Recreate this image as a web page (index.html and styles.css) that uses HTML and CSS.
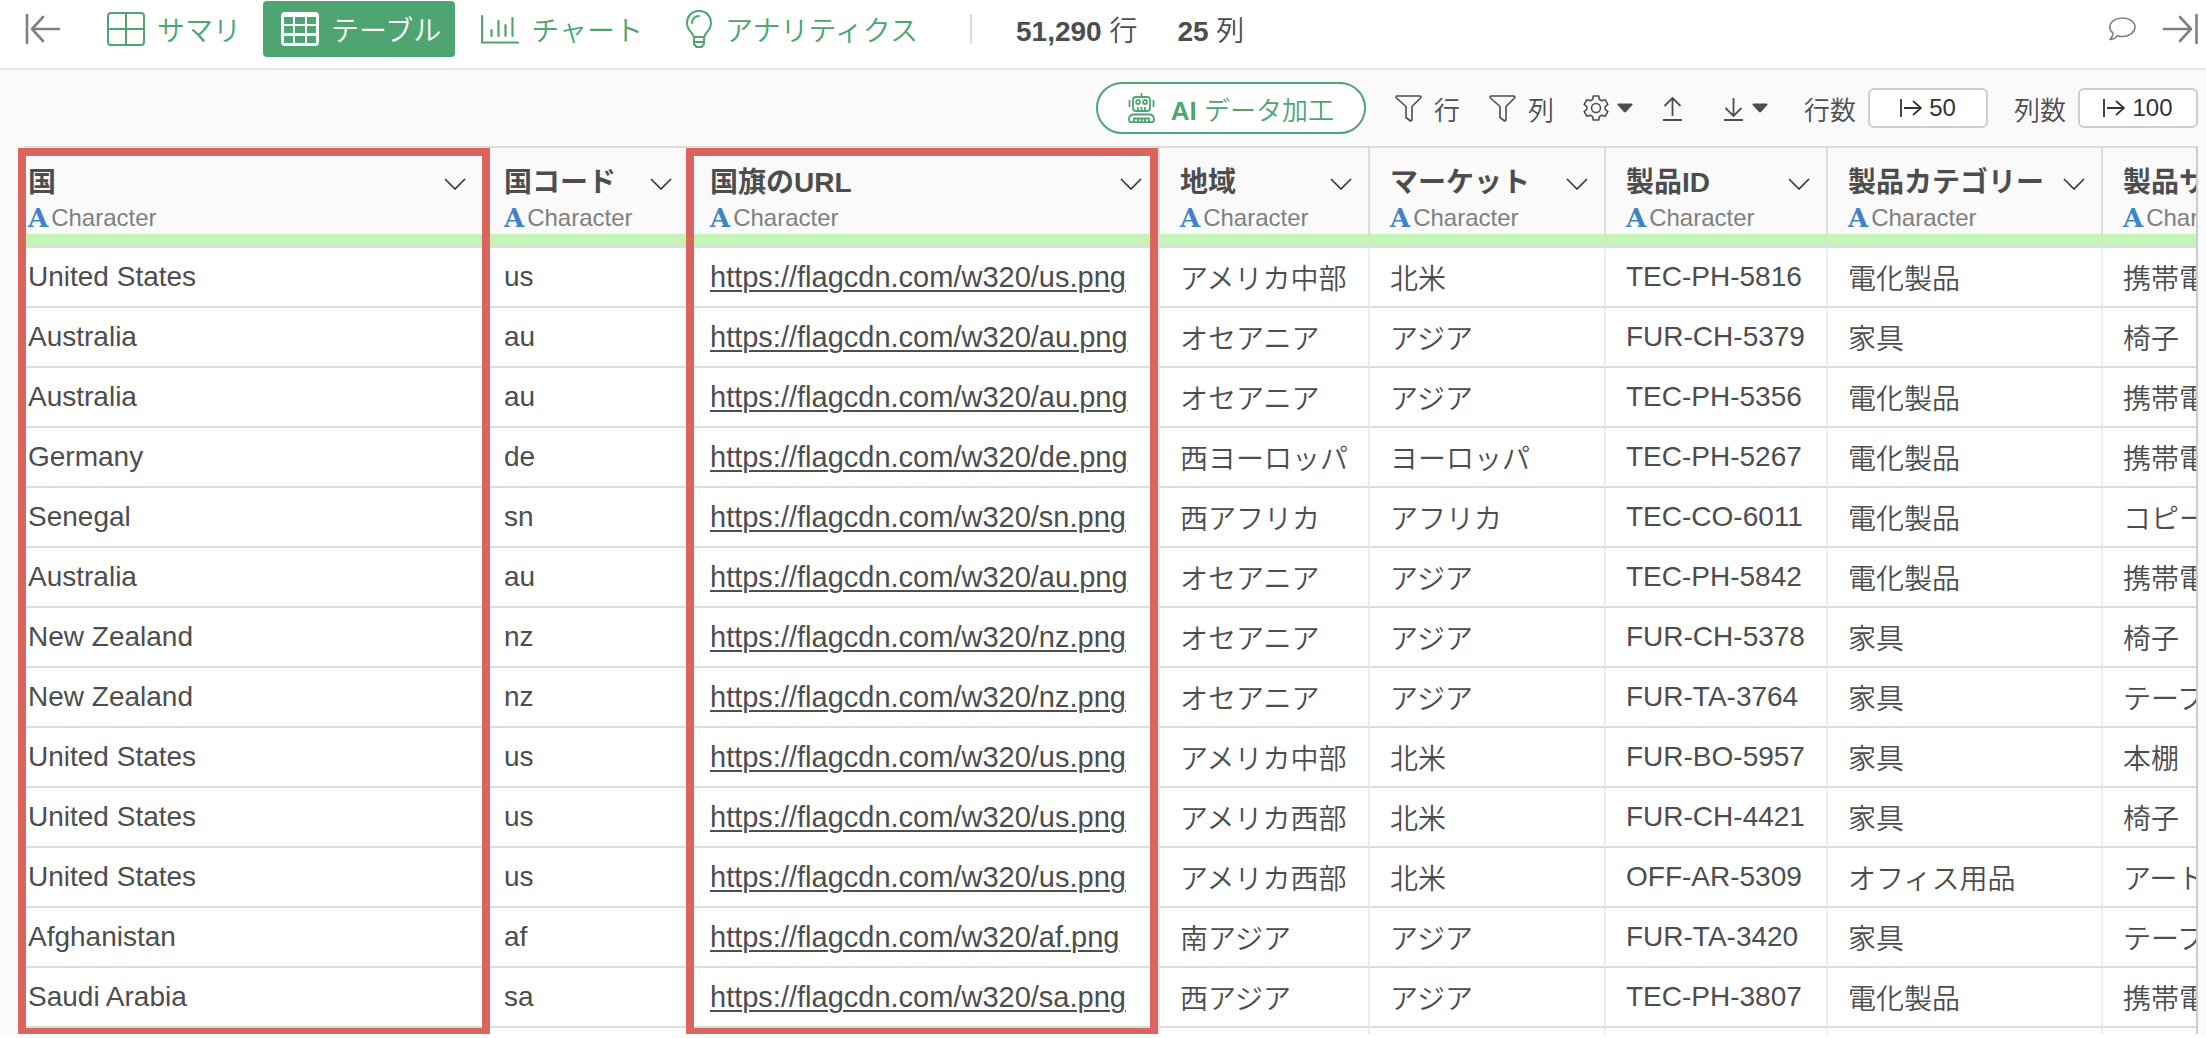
FILE: index.html
```
<!DOCTYPE html>
<html lang="ja">
<head>
  <meta charset="UTF-8">
  <meta name="viewport" content="width=device-width, initial-scale=1.0">
  <title>テーブル</title>
  <link rel="stylesheet" href="styles.css">
</head>
<body>
  <!-- 共通アイコン -->
  <svg class="symbols" aria-hidden="true">
    <symbol id="chevron" viewBox="0 0 22 12">
      <path d="M1 1l10 10L21 1" fill="none" stroke="currentColor" stroke-width="1.600"/>
    </symbol>
    <symbol id="filter" viewBox="0 0 27 27">
      <path d="M2 1h23q1.500 1 .5 2L17 11.500V25l-1.500 1-4.500-3.500v-11L1.500 3Q.5 1.500 2 1z" fill="none" stroke="currentColor" stroke-width="1.600" stroke-linejoin="round"/>
    </symbol>
    <symbol id="caret" viewBox="0 0 16 10">
      <path d="M1 .5h14q1 .5 .4 1.500L9 9q-1 .8-2 0L.6 2Q0 1 1 .5z" fill="currentColor"/>
    </symbol>
    <symbol id="limit" viewBox="0 0 22 18">
      <path d="M1 0v18M4 9h17M13 2l8 7-8 7" fill="none" stroke="currentColor" stroke-width="1.800"/>
    </symbol>
  </svg>

  <!-- 上部ナビゲーション -->
  <header class="topbar">
    <button class="icon-btn collapse" aria-label="左パネルを閉じる">
      <svg width="36" height="32" viewBox="0 0 36 32"><path d="M2 2v28M7 16h27M18 4L7 16l11 12" fill="none" stroke="currentColor" stroke-width="2.600" stroke-linecap="round"/></svg>
    </button>
    <nav class="tabs">
      <button class="tab">
        <svg width="38" height="34" viewBox="0 0 38 34"><path d="M1 4q0-3 3-3h30q3 0 3 3v26q0 3-3 3H4q-3 0-3-3zM19 1v32M1 17h36" fill="none" stroke="currentColor" stroke-width="2"/></svg>
        サマリ
      </button>
      <button class="tab active">
        <svg width="38" height="34" viewBox="0 0 38 34"><path d="M4 0h30q4 0 4 4v26q0 4-4 4H4q-4 0-4-4V4q0-4 4-4zM3 5v7h9V5zm11 0v7h10V5zm12 0v7h9V5zM3 14v7h9v-7zm11 0v7h10v-7zm12 0v7h9v-7zM3 24v7h9v-7zm11 0v7h10v-7zm12 0v7h9v-7z" fill="currentColor" fill-rule="evenodd"/></svg>
        テーブル
      </button>
      <button class="tab">
        <svg width="38" height="34" viewBox="0 0 38 34"><path d="M1 4v26.500h36M10.500 18v6M17.500 9v15M24.500 13v11M31.500 6v18" fill="none" stroke="currentColor" stroke-width="2.200" stroke-linecap="round"/></svg>
        チャート
      </button>
      <button class="tab">
        <svg width="30" height="38" viewBox="0 0 30 38"><path d="M16 1C8 1 4 7 4 13c0 7 5 9 7 14h10c2-5 7-7 7-14C28 7 24 1 16 1zM11 27v7l2.500 3h5L21 34v-7M11 32h10M9 13c0-4 3-7 7-7" fill="none" stroke="currentColor" stroke-width="2" stroke-linecap="round" stroke-linejoin="round"/></svg>
        アナリティクス
      </button>
    </nav>
    <div class="counts">
      <span><b>51,290</b> 行</span>
      <span><b>25</b> 列</span>
    </div>
    <div class="right">
      <button class="icon-btn" aria-label="コメント">
        <svg width="27" height="24" viewBox="0 0 27 24"><path d="M4 16C1 14 .8 12 .8 10 .8 5 6.500 1 13.500 1S26 5 26 10s-5.500 9.500-12.500 9.500c-2 0-3.500-.3-5-.8C7 20.500 4 22.500 1 22.500 3 20.500 4 18 4 16z" fill="none" stroke="currentColor" stroke-width="1.600" stroke-linejoin="round"/></svg>
      </button>
      <button class="icon-btn" aria-label="右パネルを閉じる">
        <svg width="36" height="32" viewBox="0 0 36 32"><path d="M34.500 2v28M2 16h27M18 4l11 12-11 12" fill="none" stroke="currentColor" stroke-width="2.600" stroke-linecap="round"/></svg>
      </button>
    </div>
  </header>

  <main class="panel">
    <!-- ツールバー -->
    <div class="toolbar">
      <button class="ai-btn">
        <svg width="27" height="30" viewBox="0 0 27 30"><g fill="none" stroke="currentColor" stroke-width="1.800"><rect x="5" y="4" width="17" height="14" rx="3"/><circle cx="10" cy="9" r="2"/><circle cx="17" cy="9" r="2"/><path d="M13.500 0v4M1.500 7v7M25.500 7v7M10 14v4M13.500 14v4M17 14v4"/><path d="M6 21.500h15c3 0 5 2 5 5 0 2-1 2.600-2 2.600H3c-1 0-2-.6-2-2.600 0-3 2-5 5-5z"/><path d="M6 29v-3.500h15V29M10 25.500V29M13.500 25.500V29M17 25.500V29"/></g></svg>
        <span><b>AI</b> データ加工</span>
      </button>
      <button class="tool"><svg width="27" height="27"><use href="#filter"/></svg>行</button>
      <button class="tool"><svg width="27" height="27"><use href="#filter"/></svg>列</button>
      <button class="tool menu" aria-label="設定">
        <svg width="26" height="26" viewBox="0 0 26 26"><g fill="none" stroke="currentColor" stroke-width="1.600" stroke-linejoin="round"><circle cx="13" cy="13" r="4.500"/><path d="M10.300 1h5.400l.7 3.400 2.400 1.400 3.300-1.100 2.700 4.600-2.600 2.300v2.800l2.600 2.300-2.700 4.600-3.300-1.100-2.400 1.400-.7 3.400h-5.400l-.7-3.400-2.400-1.400-3.300 1.100-2.700-4.600 2.600-2.300v-2.800L1.200 9.300l2.700-4.600 3.300 1.100 2.400-1.400z"/></g></svg>
        <svg width="16" height="10"><use href="#caret"/></svg>
      </button>
      <button class="tool upload" aria-label="アップロード">
        <svg width="21" height="25" viewBox="0 0 21 25"><path d="M1 24h19M10.500 20V2M2.500 10l8-8 8 8" fill="none" stroke="currentColor" stroke-width="1.800"/></svg>
      </button>
      <button class="tool menu" aria-label="ダウンロード">
        <svg width="21" height="25" viewBox="0 0 21 25"><path d="M1 24h19M10.500 2v18M2.500 12l8 8 8-8" fill="none" stroke="currentColor" stroke-width="1.800"/></svg>
        <svg width="16" height="10"><use href="#caret"/></svg>
      </button>
      <div class="limits">
        <label for="rowLimit">行数</label>
        <button id="rowLimit" class="limit"><svg width="22" height="18"><use href="#limit"/></svg>50</button>
        <label for="colLimit">列数</label>
        <button id="colLimit" class="limit"><svg width="22" height="18"><use href="#limit"/></svg>100</button>
      </div>
    </div>

    <!-- データテーブル -->
    <div class="table-wrap">
      <table>
        <colgroup>
          <col class="c-country"><col class="c-code"><col class="c-url"><col class="c-region">
          <col class="c-market"><col class="c-id"><col class="c-category"><col>
        </colgroup>
        <thead>
          <tr>
            <th><div class="name">国<svg width="22" height="12"><use href="#chevron"/></svg></div><div class="type"><i>A</i>Character</div></th>
            <th><div class="name">国コード<svg width="22" height="12"><use href="#chevron"/></svg></div><div class="type"><i>A</i>Character</div></th>
            <th><div class="name">国旗のURL<svg width="22" height="12"><use href="#chevron"/></svg></div><div class="type"><i>A</i>Character</div></th>
            <th><div class="name">地域<svg width="22" height="12"><use href="#chevron"/></svg></div><div class="type"><i>A</i>Character</div></th>
            <th><div class="name">マーケット<svg width="22" height="12"><use href="#chevron"/></svg></div><div class="type"><i>A</i>Character</div></th>
            <th><div class="name">製品ID<svg width="22" height="12"><use href="#chevron"/></svg></div><div class="type"><i>A</i>Character</div></th>
            <th><div class="name">製品カテゴリー<svg width="22" height="12"><use href="#chevron"/></svg></div><div class="type"><i>A</i>Character</div></th>
            <th><div class="name">製品サブカテゴリー</div><div class="type"><i>A</i>Character</div></th>
          </tr>
        </thead>
        <tbody>
          <tr><td>United States</td><td>us</td><td><a href="https://flagcdn.com/w320/us.png">https://flagcdn.com/w320/us.png</a></td><td>アメリカ中部</td><td>北米</td><td>TEC-PH-5816</td><td>電化製品</td><td>携帯電話</td></tr>
          <tr><td>Australia</td><td>au</td><td><a href="https://flagcdn.com/w320/au.png">https://flagcdn.com/w320/au.png</a></td><td>オセアニア</td><td>アジア</td><td>FUR-CH-5379</td><td>家具</td><td>椅子</td></tr>
          <tr><td>Australia</td><td>au</td><td><a href="https://flagcdn.com/w320/au.png">https://flagcdn.com/w320/au.png</a></td><td>オセアニア</td><td>アジア</td><td>TEC-PH-5356</td><td>電化製品</td><td>携帯電話</td></tr>
          <tr><td>Germany</td><td>de</td><td><a href="https://flagcdn.com/w320/de.png">https://flagcdn.com/w320/de.png</a></td><td>西ヨーロッパ</td><td>ヨーロッパ</td><td>TEC-PH-5267</td><td>電化製品</td><td>携帯電話</td></tr>
          <tr><td>Senegal</td><td>sn</td><td><a href="https://flagcdn.com/w320/sn.png">https://flagcdn.com/w320/sn.png</a></td><td>西アフリカ</td><td>アフリカ</td><td>TEC-CO-6011</td><td>電化製品</td><td>コピー機</td></tr>
          <tr><td>Australia</td><td>au</td><td><a href="https://flagcdn.com/w320/au.png">https://flagcdn.com/w320/au.png</a></td><td>オセアニア</td><td>アジア</td><td>TEC-PH-5842</td><td>電化製品</td><td>携帯電話</td></tr>
          <tr><td>New Zealand</td><td>nz</td><td><a href="https://flagcdn.com/w320/nz.png">https://flagcdn.com/w320/nz.png</a></td><td>オセアニア</td><td>アジア</td><td>FUR-CH-5378</td><td>家具</td><td>椅子</td></tr>
          <tr><td>New Zealand</td><td>nz</td><td><a href="https://flagcdn.com/w320/nz.png">https://flagcdn.com/w320/nz.png</a></td><td>オセアニア</td><td>アジア</td><td>FUR-TA-3764</td><td>家具</td><td>テーブル</td></tr>
          <tr><td>United States</td><td>us</td><td><a href="https://flagcdn.com/w320/us.png">https://flagcdn.com/w320/us.png</a></td><td>アメリカ中部</td><td>北米</td><td>FUR-BO-5957</td><td>家具</td><td>本棚</td></tr>
          <tr><td>United States</td><td>us</td><td><a href="https://flagcdn.com/w320/us.png">https://flagcdn.com/w320/us.png</a></td><td>アメリカ西部</td><td>北米</td><td>FUR-CH-4421</td><td>家具</td><td>椅子</td></tr>
          <tr><td>United States</td><td>us</td><td><a href="https://flagcdn.com/w320/us.png">https://flagcdn.com/w320/us.png</a></td><td>アメリカ西部</td><td>北米</td><td>OFF-AR-5309</td><td>オフィス用品</td><td>アート</td></tr>
          <tr><td>Afghanistan</td><td>af</td><td><a href="https://flagcdn.com/w320/af.png">https://flagcdn.com/w320/af.png</a></td><td>南アジア</td><td>アジア</td><td>FUR-TA-3420</td><td>家具</td><td>テーブル</td></tr>
          <tr><td>Saudi Arabia</td><td>sa</td><td><a href="https://flagcdn.com/w320/sa.png">https://flagcdn.com/w320/sa.png</a></td><td>西アジア</td><td>アジア</td><td>TEC-PH-3807</td><td>電化製品</td><td>携帯電話</td></tr>
          <tr class="rest"><td></td><td></td><td></td><td></td><td></td><td></td><td></td><td></td></tr>
        </tbody>
      </table>
      <!-- 強調枠 -->
      <div class="mark mark-country"></div>
      <div class="mark mark-url"></div>
    </div>
  </main>
</body>
</html>
```

FILE: styles.css
```
* {
  box-sizing: border-box;
}

body {
  margin: 0;
  background-color: #fff;
  color: #4d4d4d;
  font-family: "Liberation Sans", "Noto Sans CJK JP", sans-serif;
  font-size: 28px;
  font-weight: 350;
}

b {
  font-weight: 700;
}

button {
  display: flex;
  align-items: center;
  padding: 0;
  border: 0;
  background: none;
  color: inherit;
  font: inherit;
  white-space: nowrap;
  cursor: pointer;
}

svg {
  flex: none;
}

.symbols {
  display: none;
}

/* 上部ナビゲーション */
.topbar {
  display: flex;
  align-items: center;
  height: 70px;
  padding: 0 8px 10px 25px;
  border-bottom: 2px solid #e6e6e6;
  white-space: nowrap;
}

.icon-btn {
  color: #808080;
}

.collapse {
  margin-right: 28px;
}

.tabs {
  display: flex;
  gap: 8px;
}

.tab {
  gap: 12px;
  height: 56px;
  padding: 0 14px 0 18px;
  border-radius: 4px;
  color: #4ea572;
}

.tab.active {
  background-color: #4ea572;
  color: #fff;
}

.counts {
  display: flex;
  align-items: center;
  gap: 40px;
  height: 30px;
  margin-left: 38px;
  padding-left: 44px;
  border-left: 2px solid #dcdcdc;
}

.right {
  display: flex;
  align-items: center;
  gap: 26px;
  margin-left: auto;
}

/* ツールバー */
.panel {
  background-color: #fafafa;
}

.toolbar {
  display: flex;
  align-items: center;
  justify-content: flex-end;
  gap: 29px;
  height: 76px;
  padding-right: 8px;
  font-size: 26px;
}

.ai-btn {
  gap: 16px;
  height: 52px;
  padding: 0 30px;
  border: 2px solid #4ea572;
  border-radius: 26px;
  background-color: #fff;
  color: #4ea572;
}

.tool {
  gap: 12px;
}

.menu {
  gap: 8px;
}

.upload {
  margin-right: 11px;
}

.limits {
  display: flex;
  align-items: center;
  gap: 12px;
  margin-left: 7px;
}

.limit {
  justify-content: center;
  gap: 7px;
  width: 120px;
  height: 40px;
  border: 2px solid #ccc;
  border-radius: 6px;
  background-color: #fff;
  color: #333;
  font-size: 24px;
}

.limit + label {
  margin-left: 14px;
}

/* データテーブル */
.table-wrap {
  position: relative;
  margin: 0 8px 0 24px;
  border-top: 2px solid #dcdcdc;
  border-right: 2px solid #ccc;
}

table {
  width: 100%;
  table-layout: fixed;
  border-collapse: separate;
  border-spacing: 0;
  background-color: #fff;
}

.c-country { width: 460px; }
.c-code { width: 206px; }
.c-url { width: 470px; }
.c-region { width: 210px; }
.c-market { width: 236px; }
.c-id { width: 222px; }
.c-category { width: 275px; }

th, td {
  padding: 0 16px 0 20px;
  border-right: 2px solid #ececec;
  border-bottom: 2px solid #dcdcdc;
  overflow: hidden;
  text-align: left;
  white-space: nowrap;
}

th:first-child, td:first-child {
  padding-left: 4px;
}

th:last-child, td:last-child {
  border-right: 0;
}

th {
  height: 100px;
  padding-top: 12px;
  border-right-color: #dcdcdc;
  background: linear-gradient(#c4f4b8, #c4f4b8) bottom / 100% 12px no-repeat #fafafa;
  background-clip: padding-box;
  vertical-align: top;
}

td {
  height: 60px;
}

.name {
  display: flex;
  align-items: center;
  justify-content: space-between;
  height: 40px;
  font-weight: bold;
}

.name svg {
  margin-top: 8px;
  color: #333;
}

.type {
  display: flex;
  align-items: center;
  gap: 3px;
  height: 36px;
  color: #808080;
  font-size: 24px;
  font-weight: normal;
}

.type i {
  color: #3d85c6;
  font-family: "DejaVu Serif", serif;
  font-size: 26px;
  font-style: normal;
  font-weight: bold;
}

td a {
  color: inherit;
  font-size: 29px;
  text-decoration-thickness: 2px;
  text-underline-offset: 3px;
}

.rest td {
  height: 6px;
  border-bottom: 0;
}

/* 強調枠 */
.mark {
  position: absolute;
  top: 0;
  bottom: -2px;
  width: 472px;
  border: 8px solid #d9655d;
  pointer-events: none;
}

.mark-country {
  left: -6px;
}

.mark-url {
  left: 662px;
}
```
